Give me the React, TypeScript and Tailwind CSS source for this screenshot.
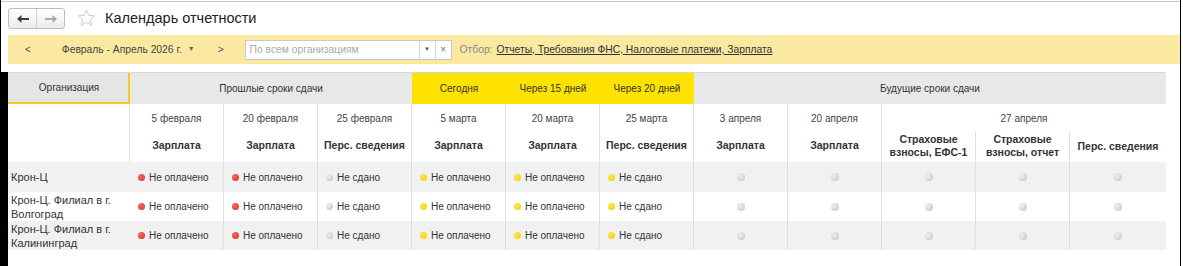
import React from "react";

type Status = { color: "red" | "yellow" | "gray"; label?: string };

const dotClass: Record<Status["color"], string> = {
  red: "bg-[radial-gradient(circle_at_35%_35%,#f26a5e,#dc2f24)]",
  yellow: "bg-[radial-gradient(circle_at_35%_35%,#ffe94a,#efcc00)]",
  gray: "bg-[radial-gradient(circle_at_35%_35%,#f0f0f0,#c2c2c2)]",
};

const columns = [
  { date: "5 февраля", name: "Зарплата" },
  { date: "20 февраля", name: "Зарплата" },
  { date: "25 февраля", name: "Перс. сведения" },
  { date: "5 марта", name: "Зарплата" },
  { date: "20 марта", name: "Зарплата" },
  { date: "25 марта", name: "Перс. сведения" },
  { date: "3 апреля", name: "Зарплата" },
  { date: "20 апреля", name: "Зарплата" },
];

const lastGroup = ["Страховые взносы, ЕФС-1", "Страховые взносы, отчет", "Перс. сведения"];

const rowStatuses: Status[] = [
  { color: "red", label: "Не оплачено" },
  { color: "red", label: "Не оплачено" },
  { color: "gray", label: "Не сдано" },
  { color: "yellow", label: "Не оплачено" },
  { color: "yellow", label: "Не оплачено" },
  { color: "yellow", label: "Не сдано" },
  { color: "gray" },
  { color: "gray" },
  { color: "gray" },
  { color: "gray" },
  { color: "gray" },
];

const orgs = [
  ["Крон-Ц"],
  ["Крон-Ц. Филиал в г.", "Волгоград"],
  ["Крон-Ц. Филиал в г.", "Калининград"],
];

function Dot({ color, big }: { color: Status["color"]; big?: boolean }) {
  return (
    <span
      className={`inline-block shrink-0 rounded-full ${big ? "h-[8px] w-[8px]" : "h-[7px] w-[7px]"} ${dotClass[color]}`}
    />
  );
}

function StatusCell({ s, last }: { s: Status; last: boolean }) {
  return (
    <div
      className={`flex items-center ${s.label ? "justify-start pl-[8px]" : "justify-center"} ${
        last ? "" : "border-r border-[#dedede]"
      }`}
    >
      <Dot color={s.color} big={!s.label} />
      {s.label ? <span className="ml-[4px] text-[10px]">{s.label}</span> : null}
    </div>
  );
}

function NavButtons() {
  return (
    <div className="flex h-[21px] w-[57px] overflow-hidden rounded-[3px] border border-[#bdbdbd] bg-gradient-to-b from-white to-[#ececec]">
      <div className="flex flex-1 items-center justify-center border-r border-[#d0d0d0]">
        <svg width="12" height="8" viewBox="0 0 12 8">
          <path d="M0 4 L4.5 0 V3 H12 V5 H4.5 V8 Z" fill="#3f3f3f" />
        </svg>
      </div>
      <div className="flex flex-1 items-center justify-center">
        <svg width="12" height="8" viewBox="0 0 12 8">
          <path d="M12 4 L7.5 0 V3 H0 V5 H7.5 V8 Z" fill="#a8a8a8" />
        </svg>
      </div>
    </div>
  );
}

function Star() {
  return (
    <svg width="19" height="18" viewBox="0 0 24 23">
      <path
        d="M12 1.2 L14.9 8.1 L22.4 8.7 L16.7 13.6 L18.4 20.9 L12 17 L5.6 20.9 L7.3 13.6 L1.6 8.7 L9.1 8.1 Z"
        fill="none"
        stroke="#c9c9c9"
        strokeWidth="1.2"
        strokeLinejoin="round"
      />
    </svg>
  );
}

export default function App() {
  return (
    <div className="h-[266px] w-[1183px] overflow-hidden bg-white font-['Liberation_Sans',Arial,sans-serif] text-[10px] text-[#333]">
      <div className="flex h-[266px] w-[1181px] flex-col border-x border-black">
        <div className="mt-[1px] h-[1px] bg-[#c8c8c8]" />
        <div className="flex h-[33px] items-center pl-[7px]">
          <NavButtons />
          <div className="ml-[12px] mt-[-1px]">
            <Star />
          </div>
          <h1 className="ml-[9px] text-[14.5px] text-[#222]">Календарь отчетности</h1>
        </div>

        <div className="ml-[7px] flex h-[29px] items-center bg-[#fbe9a1] text-[10.3px] text-[#444]">
          <span className="ml-[17px] text-[10px] text-[#555]">&lt;</span>
          <span className="ml-[31px]">Февраль - Апрель 2026 г.</span>
          <span className="ml-[6px] text-[7px] text-[#666]">▼</span>
          <span className="ml-[23px] text-[10px] text-[#555]">&gt;</span>
          <div className="ml-[21px] flex h-[20px] w-[207px] border border-[#c9c9c9] bg-white">
            <span className="flex-1 pl-[4px] leading-[18px] text-[#aaa]">По всем организациям</span>
            <span className="flex w-[16px] items-center justify-center border-l border-[#d6d6d6] text-[6px] text-[#555]">
              ▼
            </span>
            <span className="flex w-[16px] items-center justify-center border-l border-[#d6d6d6] text-[10px] text-[#777]">
              ×
            </span>
          </div>
          <span className="ml-[8px] text-[#888]">Отбор:</span>
          <span className="ml-[4px] text-[#333] underline">Отчеты, Требования ФНС, Налоговые платежи, Зарплата</span>
        </div>

        <div className="mt-[8px] flex flex-1">
          <div className="w-[7px] bg-black" />
          <div>
            <div className="grid w-[1158px] grid-cols-[122px_repeat(10,94px)_96px] grid-rows-[31px_28px_30px_30px_29px_29px] border-t border-[#d8d8d8]">
              {/* header row 1 */}
              <div className="flex items-center justify-center border-b-2 border-r-2 border-[#f3cc1c] bg-[#e5e5e5] pl-[2px]">
                Организация
              </div>
              <div className="col-span-3 flex items-center justify-center bg-[#e8e8e8]">Прошлые сроки сдачи</div>
              <div className="flex items-center justify-center bg-[#ffe200]">Сегодня</div>
              <div className="flex items-center justify-center bg-[#ffe200]">Через 15 дней</div>
              <div className="flex items-center justify-center bg-[#ffe200]">Через 20 дней</div>
              <div className="col-span-5 flex items-center justify-center bg-[#e8e8e8]">Будущие сроки сдачи</div>

              {/* header rows 2-3 */}
              <div className="row-span-2 border-r border-[#dedede]" />
              {columns.map((c) => (
                <div key={c.date} className="flex items-center justify-center border-r border-[#dedede] text-[#444]">
                  {c.date}
                </div>
              ))}
              <div className="col-span-3 flex items-center justify-center text-[#444]">27 апреля</div>

              {columns.map((c, i) => (
                <div
                  key={"n" + i}
                  className="flex items-center justify-center border-r border-[#dedede] pb-[2px] text-[10.5px] font-bold text-[#333]"
                >
                  {c.name}
                </div>
              ))}
              {lastGroup.map((n, i) => (
                <div
                  key={n}
                  className={`flex items-center justify-center px-[4px] pb-[2px] text-center text-[10.5px] font-bold leading-[13px] text-[#333] ${
                    i < 2 ? "border-r border-[#dedede]" : ""
                  }`}
                >
                  {n}
                </div>
              ))}

              {/* data rows */}
              {orgs.map((org, r) => (
                <React.Fragment key={r}>
                  <div
                    className={`flex flex-col justify-center pl-[3px] text-[11px] leading-[14px] ${
                      r % 2 === 0 ? "bg-[#f1f1f1]" : "bg-white"
                    }`}
                  >
                    {org.map((l) => (
                      <span key={l}>{l}</span>
                    ))}
                  </div>
                  {rowStatuses.map((s, i) => (
                    <div key={i} className={`grid ${r % 2 === 0 ? "bg-[#f1f1f1]" : "bg-white"}`}>
                      <StatusCell s={s} last={i === rowStatuses.length - 1} />
                    </div>
                  ))}
                </React.Fragment>
              ))}
            </div>
          </div>
        </div>
      </div>
    </div>
  );
}
